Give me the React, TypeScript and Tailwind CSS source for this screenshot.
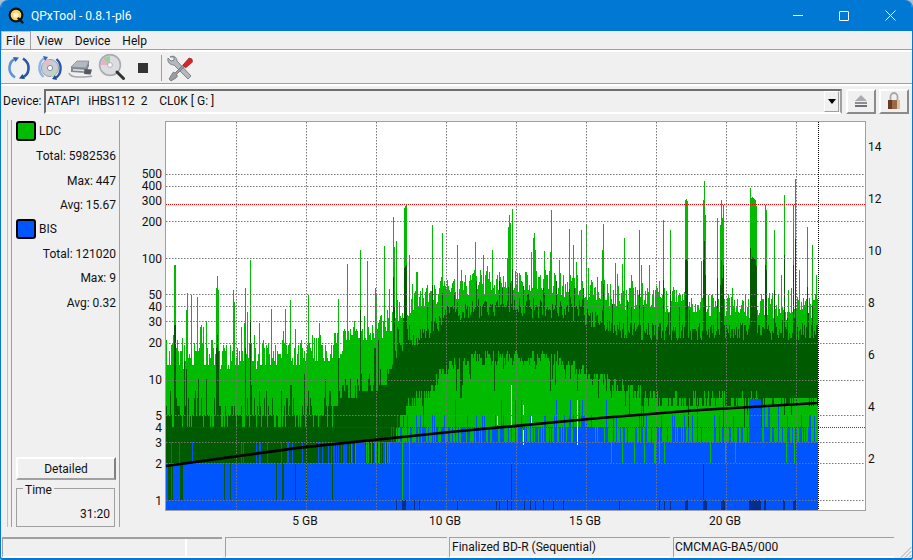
import React from 'react';

const FONT = 'Roboto, "Noto Sans", sans-serif';
const LIGHT = '#00bb00';
const DARK = '#005a00';
const BLUE = '#0055ff';
const NAVY = '#002f8f';

type Pt = [number, number];

const LT_ENV: Pt[] = [[166, 360], [300, 358], [340, 350], [360, 335], [385, 332], [395, 315], [420, 305], [445, 295], [470, 285], [550, 285], [590, 292], [620, 300], [650, 298], [690, 310], [740, 308], [818, 310]];
const DK_ENV: Pt[] = [[166, 415], [320, 415], [340, 400], [385, 385], [392, 365], [410, 350], [435, 335], [445, 322], [470, 318], [560, 318], [585, 325], [615, 340], [818, 342]];
const DKB_ENV: Pt[] = [[166, 510], [392, 510], [396, 420], [410, 395], [430, 385], [445, 360], [470, 352], [500, 350], [560, 352], [590, 370], [612, 378], [640, 385], [660, 392], [740, 392], [818, 395]];

// tall peaks read off the screenshot: x, top y
const SPIKES: Pt[] = [
  [174, 265], [175, 265], [186, 310], [206, 321], [216, 288], [217, 276], [218, 290], [245, 288], [250, 260], [338, 299], [360, 250], [375, 288],
  [393, 217], [394, 247], [404, 208], [405, 206], [406, 205], [432, 225], [442, 233], [457, 245], [492, 250], [508, 227], [510, 223], [512, 209], [533, 238], [535, 250], [550, 252], [569, 229], [602, 250], [603, 224],
  [639, 230], [663, 220], [670, 230], [685, 200], [686, 199], [687, 201], [703, 200], [704, 181], [705, 215], [717, 218], [720, 225], [721, 200], [722, 218], [723, 205], [750, 188], [751, 198], [752, 197], [753, 198], [754, 199], [755, 200], [756, 206], [765, 205], [766, 210], [774, 230], [784, 195], [793, 205], [795, 179], [807, 227], [812, 245],
];
const GREEN_DOWN = [168, 169, 170, 172, 180, 181, 182, 224, 230, 276, 282, 283, 295, 306, 332, 402, 409];
const WHITE: [number, number, number][] = [[511, 385, 420], [511, 416, 425], [523, 405, 415], [523, 430, 445], [577, 400, 445], [497, 416, 425], [531, 416, 425]];
const NAVY_BARS: [number, number, number][] = [[685, 687, 500], [703, 703, 463], [704, 706, 500], [721, 724, 500], [749, 760, 500], [764, 765, 500], [783, 784, 500], [793, 795, 500], [511, 511, 463], [402, 405, 500]];

const HLINES = [174, 186, 221, 258, 294, 306, 321, 343, 380, 415, 442, 463, 500];
const VLINES = [236, 306, 376, 446, 516, 586, 656, 726, 796];
const LEFT_LABELS: Pt[] = [[500, 174], [400, 186], [300, 201], [200, 222], [100, 259], [50, 295], [40, 307], [30, 322], [20, 343], [10, 380], [5, 416], [4, 428], [3, 443], [2, 464], [1, 501]];
const RIGHT_LABELS: Pt[] = [[14, 147], [12, 199], [10, 251], [8, 303], [6, 355], [4, 407], [2, 459]];
const X_LABELS: Pt[] = [[5, 305], [10, 445], [15, 585], [20, 725]];

const interp = (env: Pt[], x: number) => {
  for (let i = 1; i < env.length; i++) {
    if (x <= env[i][0]) {
      const [x0, y0] = env[i - 1];
      const [x1, y1] = env[i];
      return y0 + ((y1 - y0) * (x - x0)) / (x1 - x0);
    }
  }
  return env[env.length - 1][1];
};

// the y axis is logarithmic and counts are whole numbers, which gives the blocky low end
const quant = (y: number) => {
  if (y >= 510) return 510;
  const v = Math.max(1, Math.round(Math.pow(10, (500 - y) / 121)));
  return Math.round(500 - 121 * Math.log10(v));
};

const buildChart = () => {
  let seed = 20240611;
  const rnd = () => {
    seed = (seed + 0x6d2b79f5) | 0;
    let t = Math.imul(seed ^ (seed >>> 15), 1 | seed);
    t = (t + Math.imul(t ^ (t >>> 7), 61 | t)) ^ t;
    return ((t ^ (t >>> 14)) >>> 0) / 4294967296;
  };
  const bar = (x: number, y1: number, y2: number) => (y2 > y1 ? `M${x} ${y1}h1V${y2}h-1z` : '');
  let light = '';
  let dark = '';
  let blue = '';
  let navy = '';
  const spikes = new Map(SPIKES);

  for (let x = 166; x < 818; x++) {
    const left = x < 392;
    let lt = interp(LT_ENV, x) + 10 - rnd() * (left ? 30 : 26);
    if (rnd() < (left ? 0.26 : 0.2)) lt -= rnd() * rnd() * (left ? 100 : 80);
    let dk = interp(DK_ENV, x);
    if (left) {
      const r = rnd();
      if (r < 0.18 && x < 340) dk = 427;
      else if (r < 0.45) dk -= rnd() * 22;
      else if (r < 0.52) dk -= rnd() * 55;
    } else {
      dk -= rnd() * 18;
      if (rnd() < 0.12) dk -= rnd() * 30;
    }
    const peak = spikes.get(x);
    if (peak !== undefined) {
      lt = peak;
      dk = Math.min(dk, peak + 60);
    }
    let dkb = interp(DKB_ENV, x);
    if (!left) dkb += rnd() * 14 + (rnd() < 0.08 ? rnd() * 32 : 0);
    if (x >= 340 && x < 392 && rnd() < (x - 340) / 70) dkb = 442;

    let bis = 442;
    const r = rnd();
    if (x < 330) bis = r < 0.05 + 0.1 * ((x - 166) / 164) ? 442 : 463;
    else if (x < 390) bis = r < 0.5 ? 442 : 463;
    else if (x < 430) bis = r < 0.1 ? 415 : r < 0.35 ? 427 : 442;
    else if (x < 610) bis = r < 0.05 ? 400 : r < 0.2 ? 415 : r < 0.6 ? 427 : 442;
    else {
      bis = r < 0.03 ? 405 : r < 0.1 ? 415 : r < 0.42 ? 427 : 442;
      if (rnd() < 0.05) bis = 463;
    }
    if (x >= 749 && x <= 760) bis = 399;
    if (GREEN_DOWN.includes(x)) bis = 500;

    const ltY = quant(lt);
    const dkY = quant(dk);
    const dkbY = quant(dkb);
    light += bar(x, ltY, 510);
    dark += bar(x, Math.max(dkY, ltY), dkbY);
    blue += bar(x, bis, 510);
    if (x >= 390 && x < 680 && rnd() < 0.07) navy += bar(x, 500, 510);
  }
  NAVY_BARS.forEach(([a, b, y]) => {
    for (let x = a; x <= b; x++) navy += bar(x, y, 510);
  });
  return { light, dark, blue, navy };
};

const chart = buildChart();

const Chart = () => (
  <svg width={792} height={420} viewBox="120 116 792 420" className="block shrink-0" shapeRendering="crispEdges" fontFamily={FONT} fontSize={12} fill="#111">
    <rect x={165.5} y={121.5} width={700} height={389} fill="#fff" stroke="#a0a0a0" />
    <path d={chart.light} fill={LIGHT} />
    <path d={chart.dark} fill={DARK} />
    <path d={chart.blue} fill={BLUE} />
    <path d={chart.navy} fill={NAVY} />
    {WHITE.map(([x, a, b]) => (
      <rect key={`${x}-${a}`} x={x} y={a} width={1} height={b - a} fill="#fff" />
    ))}
    {HLINES.map((y) => (
      <line key={y} x1={166} x2={865} y1={y + 0.5} y2={y + 0.5} stroke="#777" strokeDasharray="1.500 1.500" shapeRendering="auto" />
    ))}
    <line x1={166} x2={865} y1={204.5} y2={204.5} stroke="#f00000" strokeDasharray="1 1" shapeRendering="auto" />
    <line x1={166} x2={865} y1={427.5} y2={427.5} stroke="#e00000" strokeDasharray="1 1" shapeRendering="auto" />
    {VLINES.map((x) => (
      <line key={x} x1={x + 0.5} x2={x + 0.5} y1={122} y2={510} stroke="#777" strokeDasharray="1.500 1.500" shapeRendering="auto" />
    ))}
    <line x1={818.5} x2={818.5} y1={122} y2={510} stroke="#000" strokeDasharray="1 1" />
    <polyline points="166,466 300,447.6 450,432 600,418 700,410 818,403" fill="none" stroke="#000" strokeWidth={2.6} shapeRendering="auto" />
    <g shapeRendering="auto">
      {LEFT_LABELS.map(([v, y]) => (
        <text key={v} x={162} y={y + 4} textAnchor="end">{v}</text>
      ))}
      {RIGHT_LABELS.map(([v, y]) => (
        <text key={v} x={868} y={y + 4}>{v}</text>
      ))}
      {X_LABELS.map(([v, x]) => (
        <text key={v} x={x} y={525} textAnchor="middle">{v} GB</text>
      ))}
    </g>
  </svg>
);

const AppLogo = () => (
  <svg width={17} height={17} viewBox="0 0 17 17">
    <circle cx={8} cy={8} r={6.4} fill="#f6d66a" stroke="#111" strokeWidth={2.2} />
    <circle cx={8} cy={8} r={2.6} fill="#fff3c8" />
    <path d="M10.5 11.5l4 4" stroke="#111" strokeWidth={2.4} strokeLinecap="round" />
  </svg>
);

const Reload = () => (
  <svg width={26} height={26} viewBox="0 0 26 26" fill="none">
    <path d="M10 3.5C2.5 6 .5 17 9 22.5" stroke="#5f95d8" strokeWidth={2.6} />
    <path d="M7 2l6 .5-3.5 4.5z" fill="#2f66b8" />
    <path d="M16 22.5C23.5 20 25.5 9 17 3.5" stroke="#2a57a8" strokeWidth={2.6} />
    <path d="M19 24l-6-.5 3.5-4.5z" fill="#23498f" />
  </svg>
);

const DiscReload = () => (
  <svg width={26} height={26} viewBox="0 0 26 26" fill="none">
    <circle cx={13} cy={13} r={8.6} fill="#c9ccd2" stroke="#9aa0a8" />
    <path d="M13 13L6 8a8.6 8.6 0 0 1 6-4z" fill="#e8b9c8" />
    <path d="M13 13l7 5a8.6 8.6 0 0 1-6 4z" fill="#b5d8c0" />
    <circle cx={13} cy={13} r={2.6} fill="#fff" stroke="#8a8f96" />
    <path d="M8 3C1.5 6 .2 16 6.5 22" stroke="#8db4e4" strokeWidth={2.4} />
    <path d="M18 23c6.5-3 7.8-13 1.500-19" stroke="#2a57a8" strokeWidth={2.4} />
    <path d="M6 1l5 1-3 4z" fill="#2f66b8" />
    <path d="M20 25l-5-1 3-4z" fill="#23498f" />
  </svg>
);

const Drive = () => (
  <svg width={26} height={26} viewBox="0 0 26 26">
    <path d="M3 12l6-6h12l-3 7z" fill="#b4b9c1" stroke="#7d8289" strokeWidth={0.7} />
    <path d="M3 12l15 1 3-7v5l-3 7-15-1z" fill="#83878e" />
    <path d="M5 14l11 .7v1.500l-11-.7z" fill="#e4e5e8" />
    <path d="M17 14l7 .5-1.500 5L16 19z" fill="#55585e" />
    <path d="M1 18c1 3 4 4 9 4s11 0 14-1" stroke="#a5a7ab" strokeWidth={1.6} fill="none" />
  </svg>
);

const Magnifier = () => (
  <svg width={28} height={28} viewBox="0 0 28 28">
    <circle cx={12} cy={11} r={10.4} fill="#dcdde0" stroke="#a8abb0" strokeWidth={1.6} />
    <path d="M12 11L5 5a9 9 0 0 1 7-3z" fill="#9fcf9c" />
    <path d="M12 11l-7-6a9 9 0 0 0-2 6z" fill="#e5b0c8" />
    <circle cx={12} cy={11} r={2.4} fill="#fff" stroke="#9a9ea4" strokeWidth={0.7} />
    <path d="M19 18l6.500 6.500" stroke="#333" strokeWidth={3} strokeLinecap="round" />
  </svg>
);

const Tools = () => (
  <svg width={26} height={28} viewBox="0 0 26 28">
    <path d="M3 3c3-2 7 0 7 4l14 15-3 3L7 11C3 11 0 8 1 4l3 3 3-1 0-3z" fill="#b4b8bd" stroke="#6c7076" strokeWidth={0.8} />
    <path d="M18 9L8 19l-1.500-1L5 20l-3 5 2 2 5-3 1.500-2-1-1.500 10-10z" fill="#9a9da2" stroke="#55585d" strokeWidth={0.6} />
    <path d="M16 11l6-7 3 1 .5 3-7 6z" fill="#d8232a" stroke="#961318" strokeWidth={0.6} />
  </svg>
);

const Eject = () => (
  <svg width={16} height={14} viewBox="0 0 16 14">
    <path d="M8 1l6 6H2z" fill="#a9abad" />
    <rect x={2} y={8} width={12} height={2} fill="#8b8d90" />
    <rect x={2} y={11} width={12} height={2} fill="#6e7073" />
  </svg>
);

const Lock = () => (
  <svg width={14} height={18} viewBox="0 0 14 18" fill="none">
    <path d="M3.500 8V4.500a3.500 3.500 0 0 1 7 0V8" stroke="#a8a8a8" strokeWidth={1.8} />
    <rect x={1} y={8} width={12} height={9} fill="#9a6a48" />
    <rect x={1} y={8} width={4} height={9} fill="#6a3a24" />
    <rect x={10} y={8} width={3} height={9} fill="#d8c0a0" />
  </svg>
);

const Stat = ({ label, value }: { label: string; value: string }) => (
  <div className="h-[24.5px] flex items-center justify-end whitespace-pre">
    {label}: {value}
  </div>
);

const Legend = ({ name, color }: { name: string; color: string }) => (
  <div className="h-[22px] flex items-center gap-[3px]">
    <div className={`w-5 h-5 rounded-[3px] border-2 border-black ${color}`} />
    <span>{name}</span>
  </div>
);

const App: React.FC = () => {
  const menus = ['File', 'View', 'Device', 'Help'];

  return (
    <div className="w-[913px] h-[560px] bg-[#aebfd0]" style={{ fontFamily: FONT }}>
      <div className="relative w-full h-full flex flex-col bg-[#f0f0f0] rounded-t-lg rounded-b-[3px] border-x border-b-2 border-[#0078d4] overflow-hidden text-[12px] leading-none text-[#111]">
        {/* Title bar */}
        <div className="h-[31px] shrink-0 -mx-px bg-[#0078d4] text-white flex items-center">
          <div className="ml-[8px] w-[23px]">
            <AppLogo />
          </div>
          <span className="text-[12px]">QPxTool - 0.8.1-pl6</span>
          <div className="ml-auto flex items-center">
            <div className="w-[46px] flex justify-center">
              <div className="w-[10px] h-px bg-white" />
            </div>
            <div className="w-[46px] flex justify-center">
              <div className="w-[10px] h-[10px] border border-white rounded-[1px]" />
            </div>
            <div className="w-[46px] flex justify-center">
              <svg width={11} height={11} viewBox="0 0 11 11" stroke="#fff" strokeWidth={1}>
                <path d="M.5.500l10 10M10.500.500l-10 10" />
              </svg>
            </div>
          </div>
        </div>

        {/* Menu bar */}
        <div className="h-[21px] shrink-0 flex items-start border-b-2 border-b-white relative">
          {menus.map((m, i) => (
            <div key={m} className={`h-[19px] flex items-center ${i === 0 ? 'pl-[4px] pr-[5px] border-t border-l border-r border-[#c0c0c0] border-r-[#a0a0a0]' : 'px-[6px]'}`}>
              {m}
            </div>
          ))}
          <div className="absolute left-0 right-0 bottom-0 h-px bg-[#a0a0a0]" />
        </div>

        {/* Toolbar */}
        <div className="h-[34px] shrink-0 flex items-center pl-[2px] border-b-2 border-b-white relative">
          <div className="absolute left-0 right-0 bottom-0 h-px bg-[#a0a0a0]" />
          <div className="w-[31px] flex justify-center"><Reload /></div>
          <div className="w-[31px] flex justify-center"><DiscReload /></div>
          <div className="w-[31px] flex justify-center"><Drive /></div>
          <div className="w-[31px] flex justify-center"><Magnifier /></div>
          <div className="w-[31px] flex justify-center">
            <div className="w-[10px] h-[10px] bg-[#333]" />
          </div>
          <div className="ml-[3px] w-px h-[26px] bg-[#a0a0a0]" />
          <div className="ml-[5px]"><Tools /></div>
        </div>

        {/* Device row */}
        <div className="h-[30px] shrink-0 flex items-center pl-[2px]">
          <span className="w-[41px]">Device:</span>
          <div className="w-[798px] h-[25px] flex items-center justify-between pl-[1px] pr-[1px] border-2 border-[#6e6e6e] border-r-[#a0a0a0] border-b-white">
            <span className="whitespace-pre">ATAPI   iHBS112  2    CL0K [ G: ]</span>
            <div className="w-[15px] h-[21px] flex items-center justify-center border border-white border-r-[#a0a0a0] border-b-[#a0a0a0]">
              <div className="w-0 h-0 border-x-[4px] border-x-transparent border-t-[5px] border-t-black" />
            </div>
          </div>
          <div className="ml-[4px] w-[30px] h-[25px] flex items-center justify-center border-2 border-white border-r-[#8a8a8a] border-b-[#8a8a8a]">
            <Eject />
          </div>
          <div className="ml-[3px] w-[30px] h-[25px] flex items-center justify-center border-2 border-white border-r-[#8a8a8a] border-b-[#8a8a8a]">
            <Lock />
          </div>
        </div>

        {/* Main area */}
        <div className="flex-1 flex min-h-0">
          <div className="ml-[6px] mt-[4px] w-[5px] h-[407px] border-x border-[#c0c0c0] border-r-[#a0a0a0]" />
          <div className="mt-[4px] w-[108px] h-[407px] flex flex-col pl-[4px] pr-[3px] border-r border-[#a0a0a0]">
            <Legend name="LDC" color="bg-[#00bb00]" />
            <div className="mt-[2px]">
              <Stat label="Total" value="5982536" />
              <Stat label="Max" value="447" />
              <Stat label="Avg" value="15.67" />
            </div>
            <Legend name="BIS" color="bg-[#0055ff]" />
            <div className="mt-[2px]">
              <Stat label="Total" value="121020" />
              <Stat label="Max" value="9" />
              <Stat label="Avg" value="0.32" />
            </div>
            <button className="mt-auto h-[23px] w-[100px] shrink-0 border-2 border-white border-r-[#808080] border-b-[#a0a0a0] bg-[#f0f0f0]">
              Detailed
            </button>
            <fieldset className="mt-[1px] h-[46px] w-[99px] shrink-0 border border-[#a0a0a0]">
              <legend className="ml-[6px] px-[2px] h-[14px] leading-[18px]">Time</legend>
              <div className="text-right pr-[4px] mt-[13px]">31:20</div>
            </fieldset>
          </div>
          <Chart />
        </div>

        {/* Status bar */}
        <div className="h-[22px] shrink-0 flex gap-[3px] pl-[1px] pt-px">
          <div className="w-[220px] flex border-t-2 border-l border-[#a0a0a0] border-b-2 border-b-white">
            <div className="w-[184px] border-r-2 border-white" />
          </div>
          <div className="w-[222px] border-t border-l border-[#a0a0a0] border-b-2 border-b-white" />
          <div className="w-[221px] -ml-px flex items-center pl-[2px] border-t border-l border-[#a0a0a0] border-b-2 border-b-white">
            Finalized BD-R (Sequential)
          </div>
          <div className="w-[221px] flex items-center pl-[1px] border-t border-l border-[#a0a0a0] border-b-2 border-b-white">
            CMCMAG-BA5/000
          </div>
        </div>

        <svg className="absolute right-0 bottom-0" width={12} height={12} viewBox="0 0 12 12" stroke="#a8a8a8" strokeWidth={1}>
          <path d="M11.500 1L1 11.500M11.500 5L5 11.500M11.500 9L9 11.500" />
        </svg>
      </div>
    </div>
  );
};

export default App;
